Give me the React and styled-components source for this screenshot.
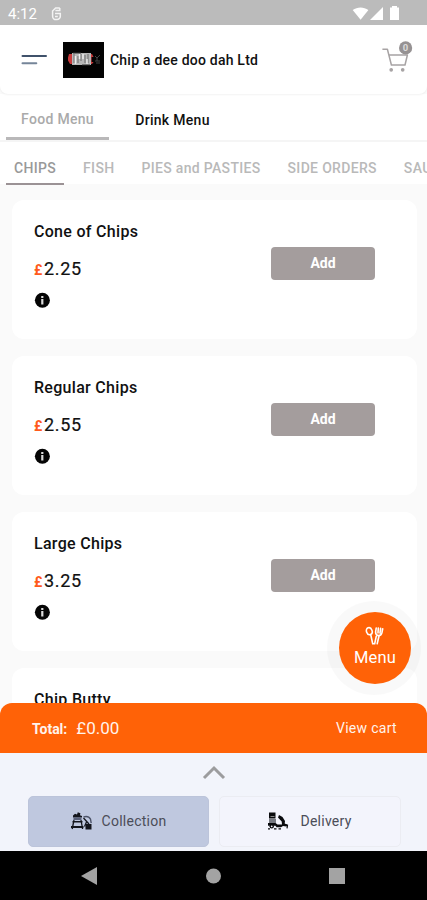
import React from 'react';
import styled, { createGlobalStyle } from 'styled-components';

const GlobalStyle = createGlobalStyle`
    * { box-sizing: border-box; }
    body {
        margin: 0;
        font-family: Roboto, "Liberation Sans", sans-serif;
        color: #111;
    }
    button {
        font-family: inherit;
        border: none;
        padding: 0;
    }
`;

const Screen = styled.div`
    position: relative;
    display: flex;
    flex-direction: column;
    width: 427px;
    height: 900px;
    overflow: hidden;
    background: #fafafa;
`;

const StatusBar = styled.div`
    display: flex;
    align-items: center;
    height: 25px;
    flex: none;
    padding: 2px 27px 0 8px;
    background: #bbb;
    color: #fff;
    font-size: 15px;
    svg { display: block; }
`;

const StatusLogo = styled.div`
    margin: 0 auto 0 14px;
`;

const Header = styled.header`
    display: flex;
    align-items: center;
    height: 69px;
    flex: none;
    padding: 0 14px 0 21px;
    background: #fff;
    border-radius: 0 0 8px 8px;
    box-shadow: 0 1px 2px rgba(0, 0, 0, 0.05);
    z-index: 1;
    svg { display: block; }
`;

const ShopLogo = styled.div`
    margin-left: 15px;
`;

const ShopName = styled.h1`
    flex: 1;
    margin: 0 0 0 6px;
    font-size: 14px;
    font-weight: 500;
    letter-spacing: 0.22px;
    white-space: nowrap;
`;

const MenuTabs = styled.nav`
    display: flex;
    height: 48px;
    flex: none;
    padding-left: 6px;
    background: #fff;
    border-bottom: 2px solid #f5f5f5;
`;

const MenuTab = styled.button`
    width: ${({ $active }) => ($active ? '103px' : '127px')};
    height: 46px;
    padding-top: ${({ $active }) => ($active ? '6px' : '8px')};
    background: none;
    border-bottom: 3px solid ${({ $active }) => ($active ? '#b9b8b9' : 'transparent')};
    color: ${({ $active }) => ($active ? '#aaa' : '#111')};
    font-size: 14px;
    font-weight: 500;
    letter-spacing: 0.3px;
`;

const CategoryTabs = styled.nav`
    display: flex;
    gap: 11px;
    height: 43px;
    flex: none;
    padding-left: 6px;
    overflow: hidden;
    background: linear-gradient(#fff 42px, #fafafa 42px);
`;

const CategoryTab = styled.button`
    flex: none;
    height: 43px;
    padding: 10px 8px 0;
    background: none;
    border-bottom: 2px solid ${({ $active }) => ($active ? '#9b9295' : 'transparent')};
    color: ${({ $active }) => ($active ? '#999' : '#b9b9b9')};
    font-size: 14px;
    font-weight: 500;
    letter-spacing: 0.32px;
    white-space: nowrap;
`;

const ProductList = styled.main`
    display: flex;
    flex-direction: column;
    gap: 17px;
    flex: 1;
    min-height: 0;
    padding: 15px 10px 0 12px;
    overflow: hidden;
`;

const Card = styled.article`
    display: flex;
    justify-content: space-between;
    height: 139px;
    flex: none;
    padding: 22px 42px 0 22px;
    background: #fff;
    border-radius: 12px;
`;

const ProductName = styled.h2`
    margin: 0;
    font-size: 16px;
    font-weight: 500;
    line-height: 20px;
    letter-spacing: 0.3px;
`;

const Price = styled.p`
    margin: 16px 0 11px;
    font-size: 18px;
    line-height: 22px;
    letter-spacing: 0.7px;
    -webkit-text-stroke: 0.2px #111;
`;

const Currency = styled.span`
    margin-right: 1px;
    color: #ff5a1c;
    font-size: 14px;
    font-weight: 700;
    -webkit-text-stroke: 0;
`;

const AddButton = styled.button`
    width: 104px;
    height: 33px;
    margin-top: 25px;
    padding-bottom: 2px;
    background: #a49d9d;
    border-radius: 4px;
    color: #fff;
    font-size: 14px;
    font-weight: 700;
`;

const MenuButton = styled.button`
    position: absolute;
    top: 612px;
    left: 339px;
    display: flex;
    flex-direction: column;
    align-items: center;
    width: 72px;
    height: 72px;
    padding-top: 14px;
    border-radius: 50%;
    background: #ff6207;
    box-shadow: -1px 0 0 11px rgba(0, 0, 0, 0.025);
    color: #fff;
    font-size: 16.5px;
    line-height: 24px;
    letter-spacing: 0.1px;
`;

const CartBar = styled.section`
    display: flex;
    align-items: center;
    height: 50px;
    flex: none;
    padding: 0 30px 0 32px;
    background: #ff6207;
    border-radius: 12px 12px 0 0;
    color: #fff3ec;
    z-index: 1;
`;

const TotalLabel = styled.span`
    margin-top: 1px;
    font-size: 14px;
    font-weight: 700;
`;

const TotalValue = styled.span`
    flex: 1;
    margin-left: 9px;
    font-size: 17px;
`;

const ViewCart = styled.span`
    font-size: 14px;
    letter-spacing: 0.3px;
`;

const OrderPanel = styled.section`
    display: flex;
    flex-direction: column;
    align-items: center;
    height: 98px;
    flex: none;
    padding-top: 12px;
    background: #f2f4fb;
    svg { display: block; }
`;

const OrderTypes = styled.div`
    display: flex;
    gap: 10px;
    margin-top: 16px;
    width: 100%;
    padding: 0 26px 0 28px;
`;

const OrderType = styled.button`
    display: flex;
    align-items: center;
    justify-content: center;
    gap: ${({ $selected }) => ($selected ? '9px' : '11px')};
    flex: ${({ $selected }) => ($selected ? '0 0 181px' : '1')};
    height: 51px;
    padding: 0 1px 1px 0;
    background: ${({ $selected }) => ($selected ? '#bfc8df' : '#f3f4fc')};
    border: 1px solid ${({ $selected }) => ($selected ? '#bcc4da' : '#ebecf2')};
    border-radius: 5px;
    color: #4b4d58;
    font-size: 14px;
    letter-spacing: 0.25px;
`;

const SystemNav = styled.footer`
    display: flex;
    align-items: center;
    justify-content: space-between;
    height: 49px;
    flex: none;
    padding: 0 82px 0 81px;
    background: #000;
`;

const categories = ['CHIPS', 'FISH', 'PIES and PASTIES', 'SIDE ORDERS', 'SAUSAGES'];

const products = [
    { name: 'Cone of Chips', price: '2.25' },
    { name: 'Regular Chips', price: '2.55' },
    { name: 'Large Chips', price: '3.25' },
    { name: 'Chip Butty', price: '2.50' },
];

const StatusGlyph = () => (
    <svg width="11" height="14" viewBox="0 0 11 14" fill="none" stroke="#f3f3f3" strokeWidth="1.5">
        <path d="M8.8 1H4.6L1.6 4v5.2a3.4 3.4 0 0 0 3.4 3.4h1a3.3 3.3 0 0 0 3.3-3.4V6.6H4M8.8 1v2.6H4.4M4 9.4h2.8" />
    </svg>
);

const StatusIcons = () => (
    <svg width="48" height="16" viewBox="0 0 48 16" fill="#fff">
        <path d="M.7 4.1C5.3.5 11.8.5 16.4 4.1L8.6 13.8z" />
        <path d="M31 1v13H18z" />
        <path d="M40 0h5v1.5h2V14h-9V1.5h2z" />
    </svg>
);

const MenuLines = () => (
    <svg width="27" height="12" viewBox="0 0 27 12" strokeLinecap="round" strokeWidth="2">
        <path d="M1.5 2H25" stroke="#40526b" />
        <path d="M1.5 9.3h13.8" stroke="#758599" />
    </svg>
);

// Shop sign on a black tile
const SignLogo = () => (
    <svg width="41" height="36" viewBox="0 0 41 36">
        <path fill="#030303" d="M0 0h41v36H0z" />
        <path fill="#c83a3b" d="M6 12h4v10H7l-2-3.5v-3zM27 12h2l1.6 3h-2v5h2L29 22h-2z" />
        <path fill="#b8b8b8" d="M9 11h19v12H9z" />
        <path d="M11 12v9M15 14v7M18 12v7M22 13v8M25 12v9" stroke="#777" strokeWidth="1.2" />
        <path d="M12.5 14v8M16.5 12v5M20 12v5M24 17v5" stroke="#eee" strokeWidth="1.4" />
        <path d="M10 11h8M19 23h8" stroke="#333" strokeWidth="1" />
        <path d="M32 14l2 2 3-3M32 19h5M33 21h4M34 15v4" stroke="#444" fill="none" />
    </svg>
);

const CartIcon = () => (
    <svg width="32" height="34" viewBox="0 0 32 34" fill="none" stroke="#a7a3a4" strokeWidth="1.5" strokeLinejoin="round">
        <path d="M1.4 6.2h5l4 15.8h13.6l2.4-10H7.8" />
        <circle cx="10.2" cy="26.8" r="1.1" fill="#a7a3a4" />
        <circle cx="21.7" cy="26.8" r="1.1" fill="#a7a3a4" />
        <circle cx="24.6" cy="4.9" r="6.6" fill="#969293" stroke="none" />
        <text x="24.6" y="8.4" textAnchor="middle" fontSize="9.5" fontWeight="700" fill="#dcdada" stroke="none">0</text>
    </svg>
);

const CartSlot = styled.div`
    svg { overflow: visible; }
`;

const InfoIcon = () => (
    <svg width="16" height="16" viewBox="0 0 16 16">
        <circle cx="8.4" cy="8.3" r="7.5" fill="#050505" />
        <path d="M7.2 3.9h2.2v2.2H7.2zM7.2 7.1h2.2v5.3H7.2z" fill="#ddd" />
    </svg>
);

const CutleryIcon = () => (
    <svg width="20" height="20" viewBox="0 0 20 20" fill="none" stroke="#fff" strokeWidth="1.6" strokeLinecap="round">
        <ellipse cx="4.3" cy="5.2" rx="2.8" ry="3.6" transform="rotate(-20 4.3 5.2)" />
        <path d="M5.8 9l1.9 8.7h2l1.6-7.5M14 10l-1.8 7.7" />
        <path d="M11.2 2l-.6 4q0 3.2 2.6 3.6 2.9.1 3.7-2.9l.8-3.9M13.3 2l-.3 5M15.6 2.4L15 7" />
    </svg>
);

const CollectionIcon = () => (
    <svg width="23" height="20" viewBox="0 0 23 20" fill="#14161d">
        <path d="M3 4.5l2-1.7 2 .8.8-2.4 2.6 1-.4 2 2 .8v1.5H3z" />
        <path d="M3.5 6.5h8V9h-8z" fill="#59617a" />
        <path d="M2.5 10h10v1.5h-10zM1 15h12.5v2H1z" />
        <path d="M4 9L2.2 18M11 9l1.6 9" stroke="#14161d" strokeWidth="1.3" />
        <path d="M13.5 6q5-1.5 7 2.2l.7 4" fill="none" stroke="#4c5368" strokeWidth="1.4" />
        <path d="M13.5 7l5.5 6M16.5 11l-2 4.5" stroke="#14161d" strokeWidth="1.3" />
        <path d="M15.5 13h6v5.5h-6z" />
    </svg>
);

const DeliveryIcon = () => (
    <svg width="22" height="18" viewBox="0 0 22 18" fill="#090a0d">
        <path d="M2 .5h6.5v6H2z" />
        <path d="M3.5 4.5h4" stroke="#888" />
        <path d="M2 7h7v4H2z" fill="#777a82" />
        <path d="M1 11h7.5l2 1.5h4.5l-.3-3L11 5.5 12 3l3.5 2L18 9l-.3 2.5 2.8 1.3-1 1.7-3.5-.5-2 1.2H9.5l-1-1.5H1z" />
        <circle cx="4.7" cy="14.2" r="2.2" />
        <circle cx="4.7" cy="14.3" r=".9" fill="#f3f4fc" />
        <path d="M17.5 12.5l3 .8-.5 3M1 16.8h2M7 16.8h2.5M11.5 16.8H14" stroke="#090a0d" strokeWidth="1.2" fill="none" />
    </svg>
);

const App = () => {
    return <React.Fragment>
        <GlobalStyle />
        <Screen>
            <StatusBar>
                <span>4:12</span>
                <StatusLogo><StatusGlyph /></StatusLogo>
                <StatusIcons />
            </StatusBar>
            <Header>
                <MenuLines />
                <ShopLogo><SignLogo /></ShopLogo>
                <ShopName>Chip a dee doo dah Ltd</ShopName>
                <CartSlot><CartIcon /></CartSlot>
            </Header>
            <MenuTabs>
                <MenuTab $active>Food Menu</MenuTab>
                <MenuTab>Drink Menu</MenuTab>
            </MenuTabs>
            <CategoryTabs>
                {categories.map((category, i) => (
                    <CategoryTab key={category} $active={i === 0}>{category}</CategoryTab>
                ))}
            </CategoryTabs>
            <ProductList>
                {products.map(({ name, price }) => (
                    <Card key={name}>
                        <div>
                            <ProductName>{name}</ProductName>
                            <Price><Currency>£</Currency>{price}</Price>
                            <InfoIcon />
                        </div>
                        <AddButton>Add</AddButton>
                    </Card>
                ))}
            </ProductList>
            <CartBar>
                <TotalLabel>Total:</TotalLabel>
                <TotalValue>£0.00</TotalValue>
                <ViewCart>View cart</ViewCart>
            </CartBar>
            <OrderPanel>
                <svg width="24" height="15" viewBox="0 0 24 15" fill="none" stroke="#9c9c9e" strokeWidth="3">
                    <path d="M2 13L12 3l10 10" />
                </svg>
                <OrderTypes>
                    <OrderType $selected><CollectionIcon />Collection</OrderType>
                    <OrderType><DeliveryIcon />Delivery</OrderType>
                </OrderTypes>
            </OrderPanel>
            <SystemNav>
                <svg width="16" height="18" viewBox="0 0 16 18"><path d="M0 9L16 0v18z" fill="#a3a3a3" /></svg>
                <svg width="16" height="16" viewBox="0 0 16 16"><circle cx="8.5" cy="8" r="7.5" fill="#a3a3a3" /></svg>
                <svg width="16" height="16" viewBox="0 0 16 16"><path d="M0 0h16v16H0z" fill="#a3a3a3" /></svg>
            </SystemNav>
            <MenuButton><CutleryIcon />Menu</MenuButton>
        </Screen>
    </React.Fragment>
}

export default App;
